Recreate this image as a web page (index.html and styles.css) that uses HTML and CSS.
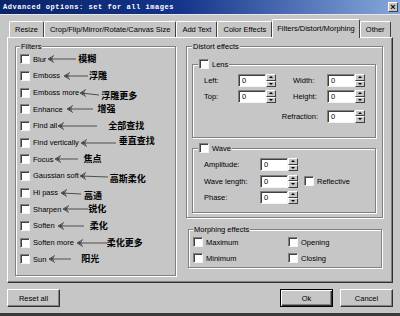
FILE: index.html
```html
<!DOCTYPE html>
<html lang="en">
<head>
  <meta charset="UTF-8">
  <title>Advanced options</title>
  <link rel="stylesheet" href="styles.css">
</head>
<body>
  <div class="window">
    <div class="titlebar">
      <span class="title">Advanced options: set for all images</span>
      <span class="close">&#215;</span>
    </div>

    <div class="tabs">
      <span class="tab">Resize</span>
      <span class="tab">Crop/Flip/Mirror/Rotate/Canvas Size</span>
      <span class="tab">Add Text</span>
      <span class="tab">Color Effects</span>
      <span class="tab active">Filters/Distort/Morphing</span>
      <span class="tab">Other</span>
    </div>

    <div class="panel">
      <fieldset class="group filters">
        <legend>Filters</legend>
        <div class="opt"><span class="cb"></span><span>Blur</span>
          <svg class="arrow" width="32" height="8"><path d="M8 0.5L2 4L8 7.5M7 2.5L4 4L7 5.5M3 4H30"/></svg><span class="cn">模糊</span></div>
        <div class="opt"><span class="cb"></span><span>Emboss</span>
          <svg class="arrow" width="29" height="8"><path d="M10 0.5L4 4L10 7.5M9 2.5L6 4L9 5.5M5 4H28"/></svg><span class="cn">浮雕</span></div>
        <div class="opt"><span class="cb"></span><span>Emboss more</span>
          <svg class="arrow" width="22" height="8"><path d="M7 0.5L1 4L7 7.5M6 2.5L3 4L6 5.5M2 4L20 6"/></svg><span class="cn lo">浮雕更多</span></div>
        <div class="opt"><span class="cb"></span><span>Enhance</span>
          <svg class="arrow" width="35" height="8"><path d="M10 0.5L4 4L10 7.5M9 2.5L6 4L9 5.5M5 4H30"/></svg><span class="cn">增强</span></div>
        <div class="opt"><span class="cb"></span><span>Find all</span>
          <svg class="arrow" width="51" height="8"><path d="M7 0.5L1 4L7 7.5M6 2.5L3 4L6 5.5M2 4H40"/></svg><span class="cn">全部查找</span></div>
        <div class="opt"><span class="cb"></span><span>Find vertically</span>
          <svg class="arrow" width="40" height="8"><path d="M8 0.5L2 4L8 7.5M7 2.5L4 4L7 5.5M3 4H37"/></svg><span class="cn hi">垂直查找</span></div>
        <div class="opt"><span class="cb"></span><span>Focus</span>
          <svg class="arrow" width="30" height="8"><path d="M8 0.5L2 4L8 7.5M7 2.5L4 4L7 5.5M3 4H25"/></svg><span class="cn">焦点</span></div>
        <div class="opt"><span class="cb"></span><span>Gaussian soft</span>
          <svg class="arrow" width="31" height="8"><path d="M7 0.5L1 4L7 7.5M6 2.5L3 4L6 5.5M2 4L29 5"/></svg><span class="cn lo">高斯柔化</span></div>
        <div class="opt"><span class="cb"></span><span>Hi pass</span>
          <svg class="arrow" width="26" height="8"><path d="M9 0.5L3 4L9 7.5M8 2.5L5 4L8 5.5M4 4L23 5"/></svg><span class="cn lo">高通</span></div>
        <div class="opt"><span class="cb"></span><span>Sharpen</span>
          <svg class="arrow" width="27" height="8"><path d="M8 0.5L2 4L8 7.5M7 2.5L4 4L7 5.5M3 4H27"/></svg><span class="cn">锐化</span></div>
        <div class="opt"><span class="cb"></span><span>Soften</span>
          <svg class="arrow" width="35" height="8"><path d="M9 0.5L3 4L9 7.5M8 2.5L5 4L8 5.5M4 4H29"/></svg><span class="cn">柔化</span></div>
        <div class="opt"><span class="cb"></span><span>Soften more</span>
          <svg class="arrow" width="33" height="8"><path d="M9 0.5L3 4L9 7.5M8 2.5L5 4L8 5.5M4 4H33"/></svg><span class="cn">柔化更多</span></div>
        <div class="opt"><span class="cb"></span><span>Sun</span>
          <svg class="arrow" width="35" height="8"><path d="M9 0.5L3 4L9 7.5M8 2.5L5 4L8 5.5M4 4H25"/></svg><span class="cn">阳光</span></div>
      </fieldset>

      <div class="right">
        <fieldset class="group distort">
          <legend>Distort effects</legend>

          <fieldset class="group lens">
            <legend class="check"><span class="cb"></span>Lens</legend>
            <div class="lens-grid">
              <span>Left:</span>
              <span class="num"><span class="field">0</span><span class="spin"><b class="up"></b><b class="down"></b></span></span>
              <span class="lab2">Width:</span>
              <span class="num"><span class="field">0</span><span class="spin"><b class="up"></b><b class="down"></b></span></span>
              <span>Top:</span>
              <span class="num"><span class="field">0</span><span class="spin"><b class="up"></b><b class="down"></b></span></span>
              <span class="lab2">Height:</span>
              <span class="num"><span class="field">0</span><span class="spin"><b class="up"></b><b class="down"></b></span></span>
              <span class="refr">Refraction:</span>
              <span class="num"><span class="field">0</span><span class="spin"><b class="up"></b><b class="down"></b></span></span>
            </div>
          </fieldset>

          <fieldset class="group wave">
            <legend class="check"><span class="cb"></span>Wave</legend>
            <div class="wave-grid">
              <span>Amplitude:</span>
              <span class="num"><span class="field">0</span><span class="spin"><b class="up"></b><b class="down"></b></span></span>
              <span></span>
              <span>Wave length:</span>
              <span class="num"><span class="field">0</span><span class="spin"><b class="up"></b><b class="down"></b></span></span>
              <span class="opt-inline"><span class="cb"></span>Reflective</span>
              <span>Phase:</span>
              <span class="num"><span class="field">0</span><span class="spin"><b class="up"></b><b class="down"></b></span></span>
              <span></span>
            </div>
          </fieldset>
        </fieldset>

        <fieldset class="group morph">
          <legend>Morphing effects</legend>
          <div class="morph-grid">
            <span class="opt-inline"><span class="cb"></span>Maximum</span>
            <span class="opt-inline"><span class="cb"></span>Opening</span>
            <span class="opt-inline"><span class="cb"></span>Minimum</span>
            <span class="opt-inline"><span class="cb"></span>Closing</span>
          </div>
        </fieldset>
      </div>
    </div>

    <div class="footer">
      <button class="btn">Reset all</button>
      <span class="spacer"></span>
      <button class="btn default">Ok</button>
      <button class="btn">Cancel</button>
    </div>
  </div>
</body>
</html>
```

FILE: styles.css
```css
* { box-sizing: border-box; margin: 0; padding: 0; }
body { width: 400px; height: 316px; overflow: hidden; background: #c6c6c6; color: #000;
  font-family: "Liberation Sans", Arial, sans-serif; font-size: 7.5px; line-height: 9px; }
.window { height: 316px; display: flex; flex-direction: column; border-bottom: 3px solid #3a3a3a; }

/* title bar */
.titlebar { height: 15px; display: flex; align-items: center; justify-content: space-between;
  padding: 0 2px 0 3px; background: linear-gradient(90deg, #0a246a 0%, #14348a 45%, #86a8dc 100%);
  border-bottom: 1px solid #e8e8e8; }
.title { font-family: "Liberation Mono", monospace; font-weight: bold; font-size: 7px; letter-spacing: 0.55px; color: #fff; }
.close { width: 10px; height: 10px; background: #c6c6c6; font-size: 9px; line-height: 8px; text-align: center;
  font-weight: bold; border: 1px solid; border-color: #fff #404040 #404040 #fff; }

/* tabs */
.tabs { height: 22px; display: flex; align-items: flex-end; padding-left: 9px; }
.tab { height: 16px; padding: 0 5px; line-height: 15px; border: 1px solid; border-bottom: none;
  border-color: #fff #404040 transparent #fff; border-radius: 2px 2px 0 0; white-space: nowrap; }
.tab.active { height: 19px; line-height: 17px; padding: 0 4px; margin-bottom: -1px; background: #c6c6c6;
  position: relative; z-index: 1; }

/* page */
.panel { height: 246px; margin: 0 7px; display: flex; gap: 10px; padding: 4px 0 0 7px;
  border: 1px solid; border-color: #fff #303030 #303030 #fff; box-shadow: inset -1px -1px #808080; }

.group { border: 1px solid #808080; box-shadow: inset 1px 1px #fff, 1px 1px #fff; }
.group legend { background: #c6c6c6; padding: 0 1px; line-height: 9px; }
.group legend.check { display: flex; align-items: center; height: 10px; }

.cb { width: 10px; height: 10px; flex: none; background: #fff; border: 1px solid;
  border-color: #808080 #f4f4f4 #f4f4f4 #808080; box-shadow: inset 1px 1px #404040; margin-right: 3px; }

.filters { width: 161px; height: 234px; padding-left: 4px; }
.opt { height: 16.67px; display: flex; align-items: center; white-space: nowrap; }
.arrow { flex: none; }
.arrow path { fill: none; stroke: #1a1a1a; stroke-width: 0.7; }
.cn { font-family: "Noto Sans CJK SC", sans-serif; font-size: 9px; font-weight: 600; line-height: 10px; }
.cn.lo { margin-top: 6px; }
.cn.hi { margin-bottom: 4px; }

.right { width: 197px; display: flex; flex-direction: column; }
.distort { height: 176px; padding-left: 5px; }
.lens { width: 184px; height: 79px; margin-top: 8px; padding-left: 5px; }
.lens-grid { display: grid; grid-template-columns: 34px 38px 51px 38px; grid-template-rows: 13px 13px 13px;
  row-gap: 3px; align-items: center; margin: 5px 0 0 6px; }
.lens-grid .lab2 { padding-left: 17px; }
.lens-grid .refr { grid-column: 3; margin-top: 7px; text-align: right; padding-right: 9px; }
.lens-grid .refr + .num { margin-top: 7px; }

.wave { width: 184px; height: 70px; margin-top: 5px; padding-left: 5px; }
.wave-grid { display: grid; grid-template-columns: 56px 44px auto; grid-template-rows: 13px 13px 13px;
  row-gap: 3.5px; align-items: center; margin: 5px 0 0 6px; }

.num { display: flex; height: 13px; }
.field { width: 28px; height: 13px; background: #fff; padding-left: 3px; line-height: 11px; border: 1px solid;
  border-color: #808080 #f4f4f4 #f4f4f4 #808080; box-shadow: inset 1px 1px #404040; }
.spin { width: 10px; display: flex; flex-direction: column; }
.spin b { flex: 1; display: flex; align-items: center; justify-content: center; background: #c6c6c6;
  border: 1px solid; border-color: #fff #404040 #404040 #fff; }
.spin b::after { content: ""; border-left: 2px solid transparent; border-right: 2px solid transparent; }
.spin .up::after { border-bottom: 2px solid #000; }
.spin .down::after { border-top: 2px solid #000; }

.opt-inline { display: flex; align-items: center; white-space: nowrap; }
.opt-inline .cb { margin-right: 3px; }

.morph { width: 194px; height: 43px; margin: 7px 0 0 2px; padding-left: 4px; }
.morph-grid { display: grid; grid-template-columns: 95px auto; grid-template-rows: 16px 16px; align-items: center; }

/* buttons */
.footer { flex: 1; display: flex; align-items: flex-start; gap: 7px; padding: 6px 7px 0; }
.spacer { flex: 1; }
.btn { width: 53px; height: 18px; background: #c6c6c6; font: inherit; color: #000; border: 1px solid;
  border-color: #fff #303030 #303030 #fff; box-shadow: inset -1px -1px #808080; }
.btn.default { border-color: #000; box-shadow: inset 1px 1px #fff, inset -1px -1px #303030, inset -2px -2px #808080; }
```
